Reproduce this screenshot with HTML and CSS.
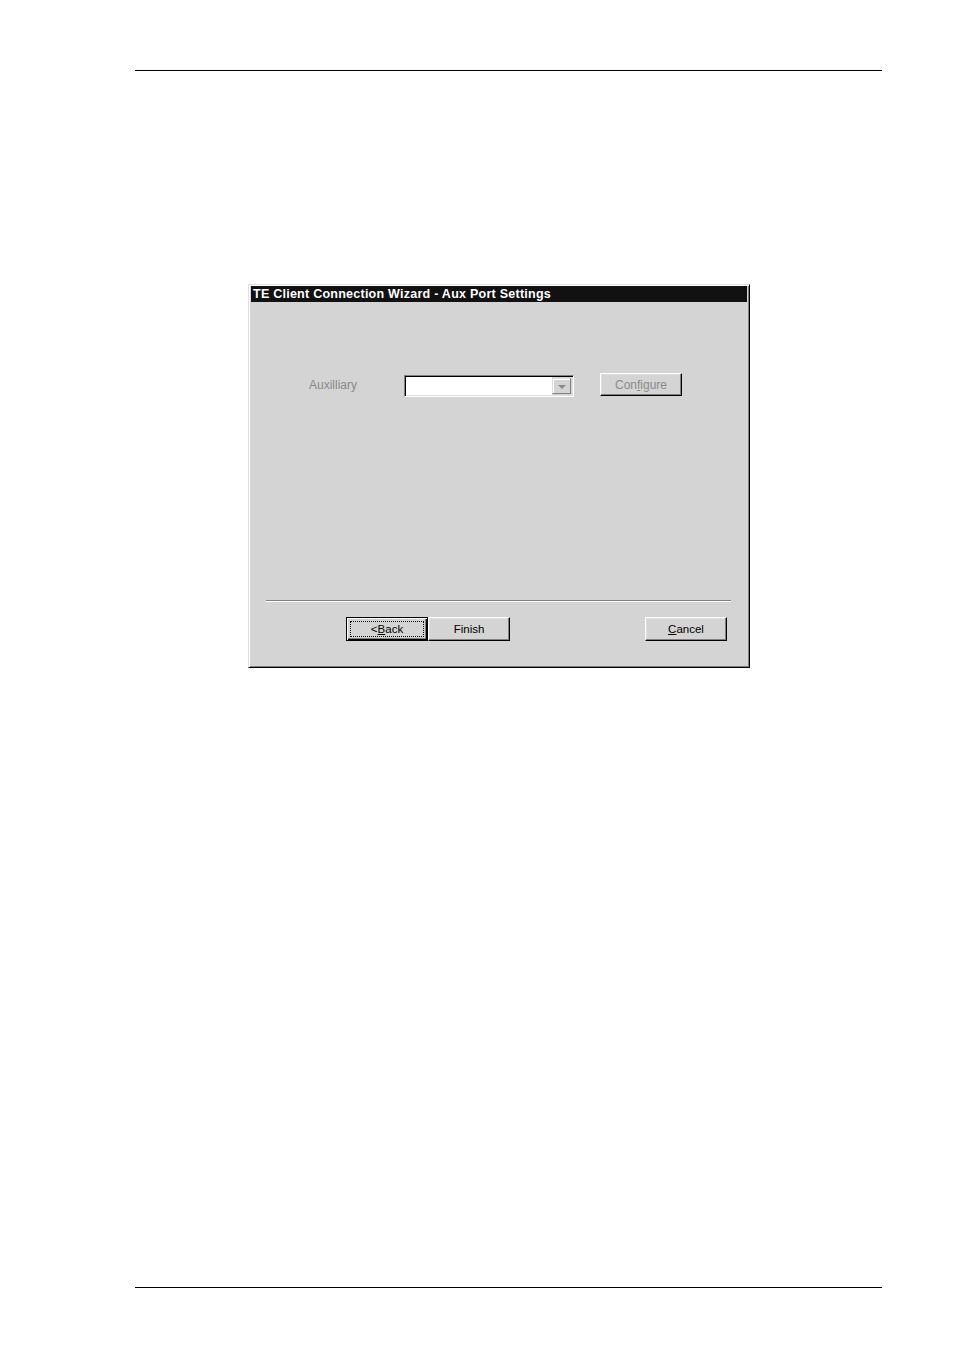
FILE: index.html
```html
<!DOCTYPE html>
<html>
<head>
<meta charset="utf-8">
<title>TE Client Connection Wizard - Aux Port Settings</title>
<link rel="stylesheet" href="styles.css">
</head>
<body>
<div class="page">
  <div class="rule rule-top"></div>
  <div class="dialog">
    <div class="titlebar">TE Client Connection Wizard - Aux Port Settings</div>
    <div class="client">
      <div class="field-row">
        <span class="label disabled">Auxilliary</span>
        <div class="combo">
          <div class="combo-text"></div>
          <div class="combo-btn"><span class="arrow"></span></div>
        </div>
        <div class="btn btn-config disabled">Con<u>f</u>igure</div>
      </div>
      <div class="separator"></div>
      <div class="button-row">
        <div class="btn btn-default">&lt;<u>B</u>ack</div>
        <div class="btn">Finish</div>
        <div class="btn btn-cancel"><u>C</u>ancel</div>
      </div>
    </div>
  </div>
  <div class="rule rule-bottom"></div>
</div>
</body>
</html>
```

FILE: styles.css
```css
html, body {
  margin: 0;
  padding: 0;
  background: #ffffff;
}

body {
  font-family: "Liberation Sans", Arial, sans-serif;
  font-size: 11.5px;
  color: #000;
}

.page {
  width: 747px;
  margin-left: 135px;
  padding-top: 70px;
  display: flex;
  flex-direction: column;
}

.rule {
  height: 1px;
  background: #000;
}

.rule-bottom {
  margin-top: 619px;
}

.dialog {
  margin-top: 213px;
  margin-left: 113px;
  width: 502px;
  height: 384px;
  box-sizing: border-box;
  background: #d4d4d4;
  border: 1px solid;
  border-color: #dfdfdf #000 #000 #dfdfdf;
  box-shadow: inset 1px 1px #ffffff, inset -1px -1px #808080;
  padding: 1px 2px 2px 2px;
  display: flex;
  flex-direction: column;
}

.titlebar {
  height: 16px;
  background: #111111;
  color: #ffffff;
  font-weight: bold;
  font-size: 12.5px;
  line-height: 17px;
  padding-left: 2px;
  white-space: nowrap;
  letter-spacing: 0.25px;
}

.client {
  flex: 1;
  display: flex;
  flex-direction: column;
  padding-left: 1px;
}

.field-row {
  margin-top: 71px;
  display: flex;
  align-items: flex-start;
  height: 23px;
  font-size: 12px;
}

.label {
  width: 95px;
  padding-left: 57px;
  margin-top: 5px;
  box-sizing: content-box;
  line-height: 14px;
}

.disabled {
  color: #8a8a8a;
}

.combo {
  margin-top: 2px;
  width: 170px;
  height: 22px;
  box-sizing: border-box;
  border: 1px solid;
  border-color: #808080 #ffffff #ffffff #808080;
  box-shadow: inset 1px 1px #000000, inset -1px -1px #dfdfdf;
  padding: 2px;
  display: flex;
}

.combo-text {
  flex: 1;
  background: #ffffff;
  margin: -1px 0 -1px -1px;
}

.combo-btn {
  width: 19px;
  box-sizing: border-box;
  background: #d4d4d4;
  border: 1px solid;
  border-color: #dfdfdf #808080 #808080 #dfdfdf;
  box-shadow: inset 1px 1px #ffffff;
  display: flex;
  align-items: center;
  justify-content: center;
}

.arrow {
  width: 0;
  height: 0;
  border-left: 4px solid transparent;
  border-right: 4px solid transparent;
  border-top: 4px solid #8a8a8a;
  margin-top: 2px;
}

.btn {
  width: 82px;
  height: 24px;
  box-sizing: border-box;
  background: #d4d4d4;
  border: 1px solid;
  border-color: #ffffff #000000 #000000 #ffffff;
  box-shadow: inset -1px -1px #808080, inset 1px 1px #dfdfdf;
  display: flex;
  align-items: center;
  justify-content: center;
  line-height: 14px;
}

.btn u {
  text-decoration: underline;
  text-underline-offset: 1px;
}

.btn-config {
  margin-left: 26px;
  height: 23px;
}

.separator {
  margin-top: 204px;
  margin-left: 14px;
  width: 465px;
  border-top: 1px solid #808080;
  border-bottom: 1px solid #ffffff;
}

.button-row {
  margin-top: 15px;
  display: flex;
  padding-left: 94px;
}

.btn-default {
  width: 82px;
  border: 1px solid #000000;
  box-shadow: inset 1px 1px #ffffff, inset -1px -1px #000000, inset -2px -2px #808080;
  outline: 1px dotted #000000;
  outline-offset: -5px;
}

.btn-cancel {
  margin-left: 135px;
}
```
